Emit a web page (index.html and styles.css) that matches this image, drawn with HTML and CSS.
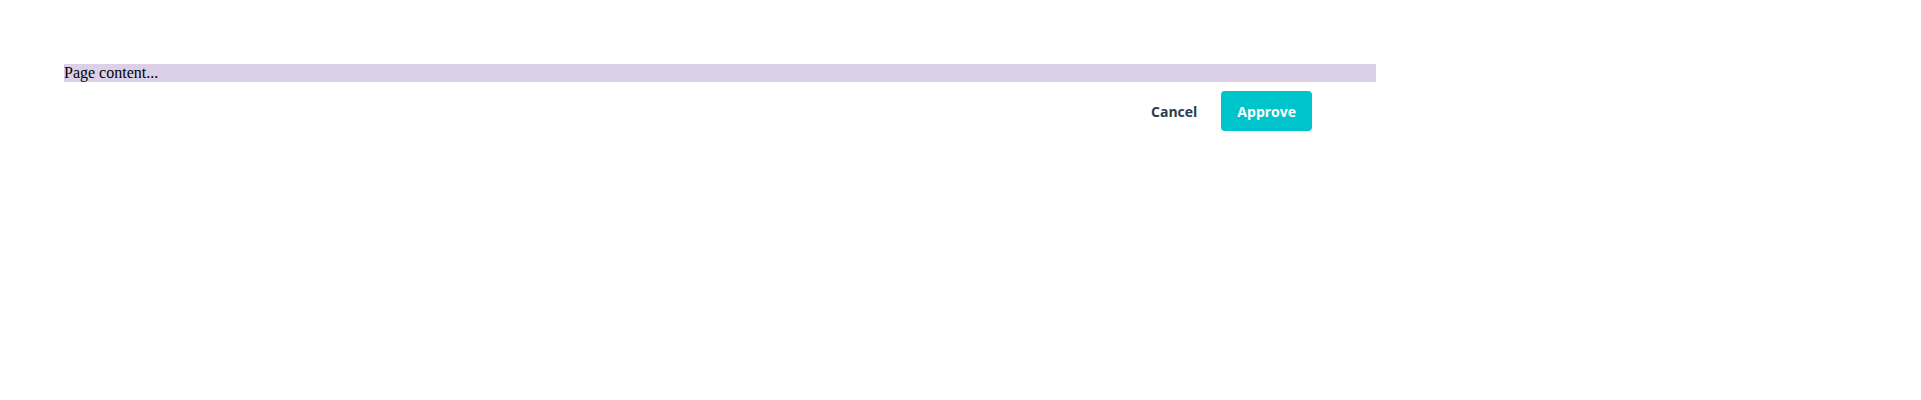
FILE: index.html
```html
<!DOCTYPE html>
<html>
<head>
<meta charset="utf-8">
<link rel="stylesheet" href="styles.css">
</head>
<body>
<div class="page">
  <div class="content">Page content...</div>
  <div class="actions">
    <button class="btn btn-cancel">Cancel</button>
    <button class="btn btn-approve">Approve</button>
  </div>
</div>
</body>
</html>
```
FILE: styles.css
```css
html, body {
  margin: 0;
  padding: 0;
  background: #ffffff;
}
.page {
  padding: 64px 0 0 64px;
  width: 1312px;
}
.content {
  background: #dbd0e8;
  font-family: "Liberation Serif", serif;
  font-size: 16px;
  color: #000;
}
.actions {
  display: flex;
  justify-content: flex-end;
  gap: 8px;
  margin-top: 9px;
  padding-right: 64px;
}
.btn {
  font-family: "Open Sans", sans-serif;
  font-weight: 700;
  font-size: 14px;
  height: 40px;
  padding: 0 16px;
  border: none;
  border-radius: 4px;
  background: transparent;
  cursor: pointer;
}
.btn-cancel {
  color: #2f3b4e;
}
.btn-approve {
  background: #00c4cc;
  color: #ffffff;
}
```
